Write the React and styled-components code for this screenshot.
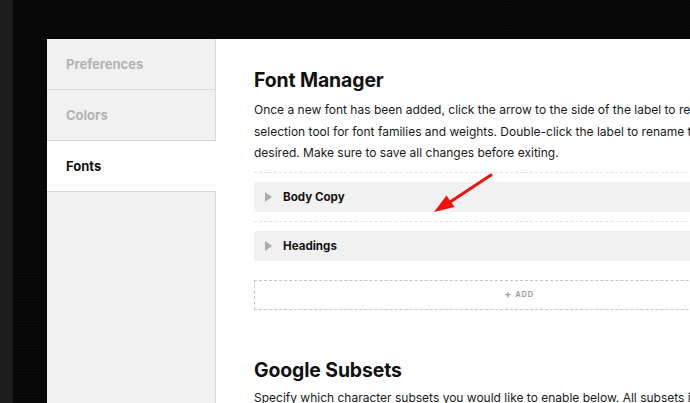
import React from "react";
import styled, { createGlobalStyle } from "styled-components";

const GlobalStyle = createGlobalStyle`
  html, body {
    margin: 0;
    padding: 0;
    background: #050505;
    overflow: hidden;
  }
  body {
    font-family: Inter, "Noto Sans", "Liberation Sans", sans-serif;
    -webkit-font-smoothing: antialiased;
  }
`;

/* ---------------- BACKDROP ---------------- */

const Screen = styled.div`
  position: relative;
  width: 690px;
  height: 403px;
  display: flex;
  background: #060606;
  overflow: hidden;
`;

const EdgeStrip = styled.div`
  width: 13px;
  flex: none;
  background: #1d1d1d;
`;

const Backdrop = styled.div`
  flex: 1;
  min-width: 0;
  padding: 39px 0 0 34px;
  background:
    repeating-linear-gradient(
      0deg,
      rgba(255,255,255,0.012) 0px,
      rgba(255,255,255,0.012) 1px,
      transparent 1px,
      transparent 3px
    ),
    #070707;
`;

/* ---------------- PANEL ---------------- */

const Panel = styled.div`
  display: flex;
  width: 775px;
  height: 420px;
  background: #fff;
`;

const Sidebar = styled.nav`
  width: 168px;
  flex: none;
  background: #f1f1f1;
  border-right: 1px solid #d9d9d9;
  display: flex;
  flex-direction: column;
`;

const NavItem = styled.div`
  height: 50px;
  display: flex;
  align-items: center;
  padding-left: 19px;
  font-size: 13px;
  font-weight: 700;
  color: ${p => (p.active ? "#111" : "#b3b3b3")};
  background: ${p => (p.active ? "#fff" : "#f1f1f1")};
  border-bottom: 1px solid #d9d9d9;
  margin-right: ${p => (p.active ? "-1px" : "0")};
`;

const Content = styled.main`
  flex: 1;
  min-width: 0;
  padding: 27px 38px 0 38px;
`;

const Heading = styled.h2`
  margin: 0 0 5px;
  font-size: 19.4px;
  line-height: 28px;
  font-weight: 700;
  color: #111;
  letter-spacing: -0.1px;
`;

const Paragraph = styled.p`
  margin: 0;
  font-size: 12px;
  line-height: 21.5px;
  color: #1a1a1a;
  white-space: nowrap;
`;

/* ---------------- FONT LIST ---------------- */

const FontList = styled.div`
  margin-top: 8px;
`;

const FontItem = styled.div`
  border-top: 1px dashed #e2e2e2;
  padding-top: 9px;
  margin-bottom: 9px;
`;

const FontRow = styled.div`
  height: 30px;
  display: flex;
  align-items: center;
  gap: 11px;
  padding-left: 11px;
  background: #f1f1f1;
  border-radius: 3px;
  font-size: 11.6px;
  font-weight: 700;
  color: #111;
`;

const Caret = styled.span`
  width: 0;
  height: 0;
  border-top: 5px solid transparent;
  border-bottom: 5px solid transparent;
  border-left: 7px solid #ababab;
`;

const AddButton = styled.div`
  margin-top: 19px;
  height: 28px;
  border: 1px dashed #c6c6c6;
  display: flex;
  align-items: center;
  justify-content: center;
  gap: 3px;
  font-size: 7.5px;
  font-weight: 700;
  letter-spacing: 0.8px;
  color: #a3a3a3;
`;

const PlusIcon = styled.span`
  font-size: 11px;
  line-height: 1;
  font-weight: 700;
`;

const Section = styled.section`
  margin-top: 46px;

  ${Heading} {
    margin-bottom: 3px;
  }
`;

/* ---------------- ANNOTATION ---------------- */

const Annotation = styled.svg`
  position: absolute;
  left: 0;
  top: 0;
  pointer-events: none;
`;

export default function App() {
  return (
    <>
      <GlobalStyle />
      <Screen>
        <EdgeStrip />
        <Backdrop>
          <Panel>
            <Sidebar>
              <NavItem>Preferences</NavItem>
              <NavItem>Colors</NavItem>
              <NavItem active>Fonts</NavItem>
            </Sidebar>
            <Content>
              <Heading>Font Manager</Heading>
              <Paragraph>
                Once a new font has been added, click the arrow to the side of the label to reveal the
                <br />
                selection tool for font families and weights. Double-click the label to rename the font if
                <br />
                desired. Make sure to save all changes before exiting.
              </Paragraph>

              <FontList>
                <FontItem>
                  <FontRow>
                    <Caret />
                    Body Copy
                  </FontRow>
                </FontItem>
                <FontItem>
                  <FontRow>
                    <Caret />
                    Headings
                  </FontRow>
                </FontItem>
              </FontList>

              <AddButton>
                <PlusIcon>+</PlusIcon>
                ADD
              </AddButton>

              <Section>
                <Heading>Google Subsets</Heading>
                <Paragraph>
                  Specify which character subsets you would like to enable below. All subsets include
                </Paragraph>
              </Section>
            </Content>
          </Panel>
        </Backdrop>

        <Annotation width="690" height="403" viewBox="0 0 690 403">
          <line x1="491" y1="175" x2="447" y2="204" stroke="#f01010" strokeWidth="3" strokeLinecap="round" />
          <polygon points="434,212 446.5,195.5 454.5,207" fill="#f01010" />
        </Annotation>
      </Screen>
    </>
  );
}
